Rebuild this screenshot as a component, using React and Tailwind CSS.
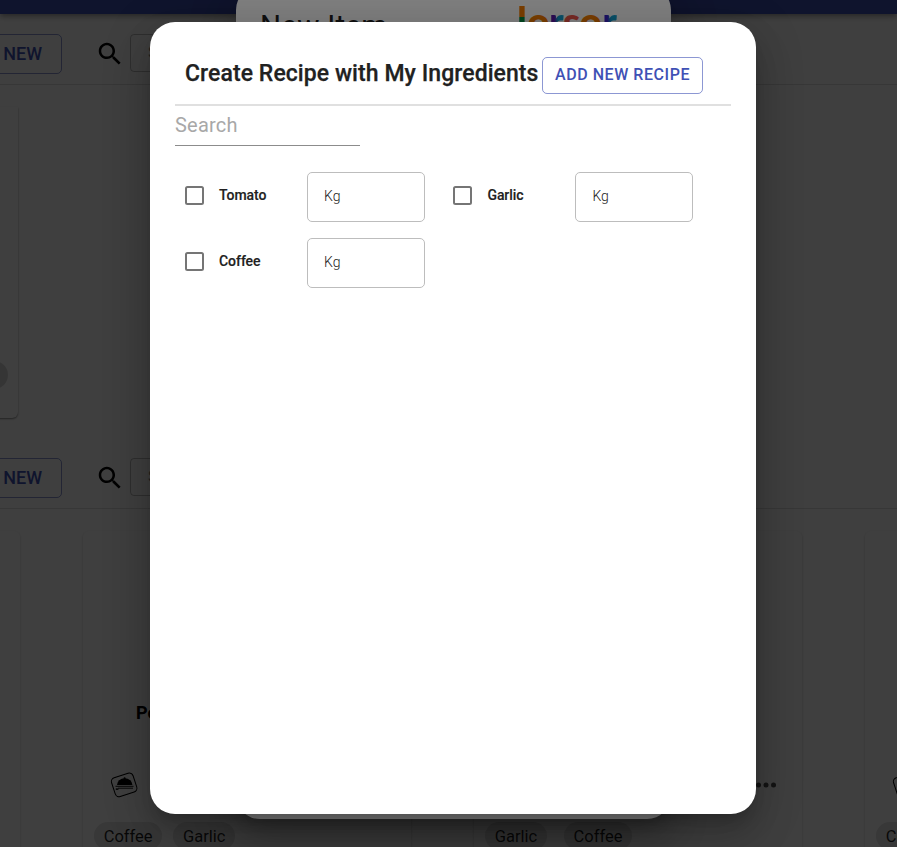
import React from "react";

function SearchIcon() {
  return (
    <svg viewBox="0 0 24 24" className="ml-[33px] mt-[5px] h-[30px] w-[30px] shrink-0 fill-black">
      <path d="M15.5 14h-.79l-.28-.27C15.41 12.59 16 11.11 16 9.5 16 5.91 13.09 3 9.5 3S3 5.91 3 9.5 5.91 16 9.5 16c1.61 0 3.09-.59 4.23-1.57l.27.28v.79l5 4.99L20.49 19l-4.99-5zm-6 0C7.01 14 5 11.99 5 9.5S7.01 5 9.5 5 14 7.01 14 9.5 11.99 14 9.5 14z" />
    </svg>
  );
}

function DishIcon() {
  return (
    <svg viewBox="0 0 30 30" className="h-[30px] w-[30px]">
      <rect x="3.9" y="5" width="22.6" height="19.8" rx="4" fill="none" stroke="black" strokeWidth="1" transform="rotate(-18 15 15)" />
      <path d="M8 14.9a7.6 6.6 0 0 1 15.4 0z" fill="black" />
      <circle cx="15.6" cy="8.2" r="1" fill="black" />
      <path d="M6.5 16.3h18M9 18.2h15" stroke="black" strokeWidth="0.9" />
      <path d="M6.8 19.1h2.6" stroke="black" strokeWidth="1.4" />
    </svg>
  );
}

function SectionBar() {
  return (
    <div className="flex h-[51px] shrink-0 border-b border-[#ddd]">
      <button className="-ml-[60px] flex h-10 w-[122px] shrink-0 items-center justify-end rounded-[5px] border border-[#3f51b5]/60 pb-[2px] pr-[19px] text-[18px] font-medium text-[#3f51b5]">
        ADD NEW
      </button>
      <SearchIcon />
      <div className="ml-[5px] flex h-[38px] w-[200px] items-center rounded-[4px] border border-black/25 pl-[17px] text-base text-black/50">
        Search
      </div>
    </div>
  );
}

function Chip({ children }) {
  return (
    <span className="flex h-7 items-center rounded-full bg-[#e0e0e0] px-[9.7px] pt-[2px] text-[16.5px] text-black/85">{children}</span>
  );
}

function RecipeCard({ title, chips }) {
  return (
    <div className="flex h-[400px] w-[328px] shrink-0 flex-col rounded-[6px] shadow-[0_1px_3px_rgba(0,0,0,0.2)]">
      <div className="mt-[170px] h-6 pl-[53px] text-[18px] font-bold leading-6 text-black">{title}</div>
      <div className="mt-[45px] flex h-[30px] items-center justify-between pl-[26px] pr-[21px]">
        <DishIcon />
        <svg viewBox="0 0 24 24" className="h-[30px] w-[30px] fill-black/70">
          <circle cx="6" cy="12" r="2" />
          <circle cx="12" cy="12" r="2" />
          <circle cx="18" cy="12" r="2" />
        </svg>
      </div>
      <div className={chips[0] === "Garlic" ? "mt-[22px] flex gap-[17px] pl-[11px]" : "mt-[22px] flex gap-[11px] pl-[11px]"}>
        {chips.map((c) => (
          <Chip key={c}>{c}</Chip>
        ))}
      </div>
    </div>
  );
}

function Ingredient({ name }) {
  return (
    <div className="flex h-[50px] items-center">
      <span className="mt-[-3px] h-[19px] w-[19px] rounded-[2.5px] border-2 border-[#757575]" />
      <span className="ml-[15px] mt-[-3px] w-[88px] text-[14px] font-medium tracking-[-0.05px] text-[#212121] [-webkit-text-stroke:0.15px_#212121]">{name}</span>
      <div className="flex h-[50px] w-[118px] items-center rounded-[5px] border border-[#bdbdbd] pb-[2px] pl-[16px] text-[14px] font-light text-[#222]">
        Kg
      </div>
    </div>
  );
}

export default function App() {
  return (
    <div className="relative h-[847px] w-[897px] overflow-hidden bg-white font-[Roboto,'Liberation_Sans',sans-serif]">
      <div className="flex h-[847px] flex-col overflow-hidden">
        <header className="h-[14px] shrink-0 bg-[#3f51b5] shadow-[0_2px_4px_-1px_rgba(0,0,0,0.2),0_4px_5px_rgba(0,0,0,0.14),0_1px_10px_rgba(0,0,0,0.12)]" />
        <div className="h-5 shrink-0" />
        <SectionBar />
        <div className="h-[373px] shrink-0 pt-[22px]">
          <div className="-ml-[10px] flex h-[311px] w-[28px] flex-col justify-end rounded-br-[6px] pb-[29px] shadow-[0_1px_2px_rgba(0,0,0,0.45)]">
            <div className="-ml-[12px] h-7 w-[30px] rounded-full bg-[#d6d6d6]" />
          </div>
        </div>
        <SectionBar />
        <div className="-ml-[308px] flex shrink-0 gap-[63px] pt-[22px]">
          <RecipeCard title="" chips={["Coffee"]} />
          <RecipeCard title="Potato" chips={["Coffee", "Garlic"]} />
          <RecipeCard title="Soup" chips={["Garlic", "Coffee"]} />
          <RecipeCard title="Pasta" chips={["Coffee"]} />
        </div>
      </div>

      <div className="absolute inset-0 flex justify-center bg-black/50">
        <div className="-mt-[14px] mr-[-10px] flex h-[833px] w-[435px] items-start justify-between rounded-[24px] bg-white pl-[24px] pr-[54px] pt-[21px] shadow-[0_11px_15px_-7px_rgba(0,0,0,0.2),0_24px_38px_3px_rgba(0,0,0,0.14),0_9px_46px_8px_rgba(0,0,0,0.12)]">
          <div className="text-[29.5px] leading-[38px] tracking-[0.25px] text-[#212121]">New Item</div>
          <div className="-mt-[2px] flex w-[100px] justify-between font-[Lato,sans-serif] text-[39px] font-black leading-[32px]">
            <span className="bg-[linear-gradient(#f57c00_0_12px,#008a3e_12px)] bg-clip-text text-transparent [-webkit-text-stroke:0]">l</span>
            <span className="-mx-px text-[#f57c00]">o</span>
            <span className="-mx-px bg-[linear-gradient(90deg,#5e17a8_35%,#14a0d0_60%)] bg-clip-text text-transparent">r</span>
            <span className="-mx-px text-[#f0564a]">s</span>
            <span className="-mx-px text-[#f57c00]">o</span>
            <span className="bg-[linear-gradient(90deg,#3d22c8_35%,#14a0d0_60%)] bg-clip-text text-transparent">r</span>
          </div>
        </div>
      </div>

      <div className="absolute inset-0 flex items-start bg-black/50">
        <main className="ml-[150px] mt-[22px] h-[792px] w-[606px] rounded-[25px] bg-white px-[25px] pt-[35px] shadow-[0_11px_15px_-7px_rgba(0,0,0,0.2),0_24px_38px_3px_rgba(0,0,0,0.14),0_9px_46px_8px_rgba(0,0,0,0.12)]">
          <div className="flex h-[49px] w-[556px] items-start border-b-2 border-[#e0e0e0] pl-[10px]">
            <h2 className="w-[357px] whitespace-nowrap text-[23px] font-medium leading-[33px] tracking-[0.07px] text-[#212121] [-webkit-text-stroke:0.25px_#212121]">
              Create Recipe with My Ingredients
            </h2>
            <button className="flex h-[37px] w-[161px] items-center justify-center rounded-[5px] border border-[#3f51b5]/60 pb-[2px] text-[16px] font-medium tracking-[0.55px] text-[#3f51b5]">
              ADD NEW RECIPE
            </button>
          </div>
          <div className="flex h-10 w-[185px] items-start border-b border-[#8c8c8c] pt-[4px] text-[20px] leading-[30px] tracking-[0.2px] text-[#a8a8a8]">
            Search
          </div>
          <div className="grid grid-cols-[268.4px_240px] gap-y-4 pl-[10px] pt-[26px]">
            <Ingredient name="Tomato" />
            <Ingredient name="Garlic" />
            <Ingredient name="Coffee" />
          </div>
        </main>
      </div>
    </div>
  );
}
